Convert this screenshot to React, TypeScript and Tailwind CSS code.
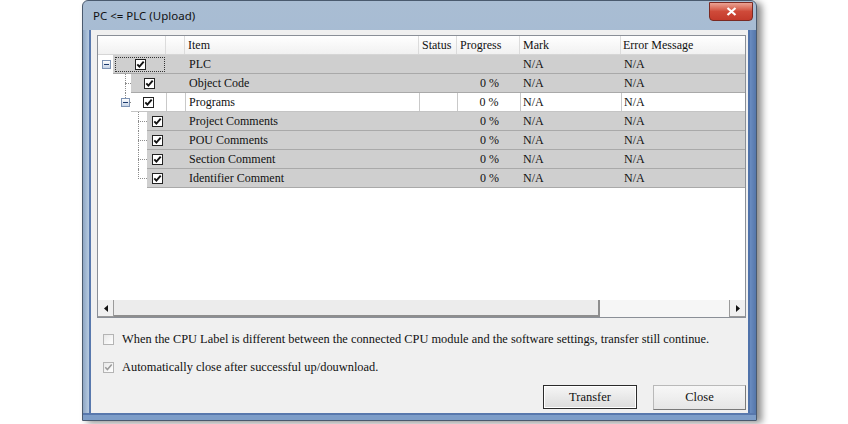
import type { ReactNode } from 'react'

type Row = {
  label: string
  level: 0 | 1 | 2
  progress: string
  white?: boolean
  focus?: boolean
}

const ROWS: Row[] = [
  { label: 'PLC', level: 0, progress: '', focus: true },
  { label: 'Object Code', level: 1, progress: '0 %' },
  { label: 'Programs', level: 1, progress: '0 %', white: true },
  { label: 'Project Comments', level: 2, progress: '0 %' },
  { label: 'POU Comments', level: 2, progress: '0 %' },
  { label: 'Section Comment', level: 2, progress: '0 %' },
  { label: 'Identifier Comment', level: 2, progress: '0 %' },
]

function Check({ size = 11 }: { size?: number }) {
  return (
    <div
      className="flex items-center justify-center border border-[#222] bg-white"
      style={{ width: size, height: size }}
    >
      <svg width="9" height="9" viewBox="0 0 9 9">
        <path d="M1.3 4.3 L3.4 6.6 L7.7 1.6" fill="none" stroke="#111" strokeWidth="1.9" />
      </svg>
    </div>
  )
}

function Minus() {
  return (
    <div className="flex h-[9px] w-[9px] items-center justify-center border border-[#7d93b4] bg-gradient-to-b from-white to-[#c5d3e6]">
      <div className="h-[1px] w-[5px] bg-[#1c3a6e]" />
    </div>
  )
}

function TreeCell({ row, index }: { row: Row; index: number }) {
  // tree guides, drawn per row
  if (row.level === 0) {
    return (
      <div className="relative flex w-[15px] shrink-0 items-center bg-white pl-[4px]">
        <Minus />
      </div>
    )
  }
  if (row.level === 1) {
    const isPrograms = row.white
    return (
      <div className="relative w-[33px] shrink-0 bg-white">
        <div
          className={`absolute left-[27px] top-0 w-0 border-l border-dotted border-[#8c8c8c] ${
            isPrograms ? 'h-[5px]' : 'h-full'
          }`}
        />
        <div className="absolute left-[27px] top-[9px] h-0 w-[6px] border-t border-dotted border-[#8c8c8c]" />
        {isPrograms && (
          <div className="absolute left-[23px] top-[5px]">
            <Minus />
          </div>
        )}
      </div>
    )
  }
  const last = index === ROWS.length - 1
  return (
    <div className="relative w-[49px] shrink-0 bg-white">
      <div
        className={`absolute left-[40px] top-0 w-0 border-l border-dotted border-[#8c8c8c] ${
          last ? 'h-[10px]' : 'h-full'
        }`}
      />
      <div className="absolute left-[40px] top-[9px] h-0 w-[9px] border-t border-dotted border-[#8c8c8c]" />
    </div>
  )
}

function Cell({
  w,
  children,
  className = '',
}: {
  w: string
  children?: ReactNode
  className?: string
}) {
  return <div className={`flex h-full shrink-0 items-center ${w} ${className}`}>{children}</div>
}

function GridRow({ row, index }: { row: Row; index: number }) {
  const sep = row.white ? 'border-r border-[#c9c9c9]' : ''
  return (
    <div className="flex h-[19px] shrink-0">
      <TreeCell row={row} index={index} />
      <div
        className={`flex flex-1 border-b ${
          row.white ? 'border-[#c4c4c4] bg-white' : 'border-[#a9a9a9] bg-[#cfcfcf]'
        }`}
      >
        <Cell w="flex-1" className={`justify-center ${sep}`}>
          {row.focus ? (
            <div className="mx-[2px] flex h-[15px] w-full items-center justify-center border border-dotted border-[#333]">
              <Check />
            </div>
          ) : (
            <Check />
          )}
        </Cell>
        <Cell w="w-[19px]" className={sep} />
        <Cell w="w-[234px]" className={`pl-[3px] ${sep}`}>
          {row.label}
        </Cell>
        <Cell w="w-[38px]" className={sep} />
        <Cell w="w-[63px]" className={`justify-center ${sep}`}>
          {row.progress}
        </Cell>
        <Cell w="w-[101px]" className={`pl-[2px] ${sep}`}>
          N/A
        </Cell>
        <Cell w="w-[123px]" className="pl-[2px]">
          N/A
        </Cell>
      </div>
    </div>
  )
}

function Header() {
  const cls = 'flex h-full shrink-0 items-center border-r border-[#dcdcdc] pl-[3px]'
  return (
    <div className="flex h-[19px] shrink-0 border-b border-[#d6d6d6] bg-gradient-to-b from-white to-[#f1f1f1]">
      <div className={`${cls} w-[68px]`} />
      <div className={`${cls} w-[19px]`} />
      <div className={`${cls} w-[234px]`}>Item</div>
      <div className={`${cls} w-[38px]`}>Status</div>
      <div className={`${cls} w-[63px]`}>Progress</div>
      <div className={`${cls} w-[101px]`}>Mark</div>
      <div className="flex h-full flex-1 items-center pl-[2px]">Error Message</div>
    </div>
  )
}

function ScrollBar() {
  return (
    <div className="flex h-[17px] shrink-0 bg-[#f6f6f6]">
      <div className="flex w-[16px] items-center justify-center border-r border-b border-[#9a9a9a] bg-[#f0f0f0]">
        <svg width="4" height="7" viewBox="0 0 4 7">
          <path d="M4 0 L0 3.5 L4 7 Z" fill="#111" />
        </svg>
      </div>
      <div className="w-[486px] border-r-2 border-b-2 border-[#8e8e8e] bg-[#ececec]" />
      <div className="flex-1" />
      <div className="flex w-[16px] items-center justify-center border-l border-b border-[#9a9a9a] bg-[#f0f0f0]">
        <svg width="4" height="7" viewBox="0 0 4 7">
          <path d="M0 0 L4 3.5 L0 7 Z" fill="#111" />
        </svg>
      </div>
    </div>
  )
}

function OptionBox({ checked }: { checked?: boolean }) {
  return (
    <div className="flex h-[11px] w-[11px] items-center justify-center border border-[#b4b4b4] bg-gradient-to-br from-[#e8e8e8] to-white">
      {checked && (
        <svg width="9" height="9" viewBox="0 0 9 9">
          <path d="M1.3 4.3 L3.4 6.6 L7.7 1.6" fill="none" stroke="#9a9a9a" strokeWidth="1.5" />
        </svg>
      )}
    </div>
  )
}

export default function App() {
  return (
    <div className="h-[424px] w-[848px] overflow-hidden bg-white pl-[82px] font-['Liberation_Serif','Times_New_Roman',serif]">
      <div className="flex h-[421px] w-[675px] flex-col rounded-t-[6px] border border-[#4a5a6e] bg-gradient-to-b from-[#a9bdd3] to-[#8fadd2] shadow-[5px_2px_7px_rgba(0,0,0,0.45)]">
        {/* title bar */}
        <div className="flex h-[29px] shrink-0 items-start justify-between">
          <div className="pl-[10px] pt-[9px] font-['Noto_Sans','Open_Sans',sans-serif] text-[11.5px] leading-none text-[#111]">
            PC &lt;= PLC (Upload)
          </div>
          <div className="mr-[3px] mt-[1px] flex h-[19px] w-[44px] items-center justify-center rounded-b-[4px] border border-[#7a2a22] bg-gradient-to-b from-[#e9a293] via-[#cf4a39] to-[#c33a2b]">
            <svg width="11" height="9" viewBox="0 0 11 9">
              <path d="M1.5 1 L9.5 8 M9.5 1 L1.5 8" stroke="white" strokeWidth="2.2" />
            </svg>
          </div>
        </div>

        <div className="flex min-h-0 flex-1">
          <div className="w-[8px] shrink-0 border-r-2 border-[#5878ad] bg-gradient-to-r from-[#8ea6c4] to-[#b7cbe1]" />
          {/* client area */}
          <div className="flex w-[657px] shrink-0 flex-col bg-[#f0f0f0] pl-[6px] pr-[2px] pt-[5px] text-[12px] text-[#111]">
            <div className="flex h-[283px] w-[649px] shrink-0 flex-col border border-[#8a8f97] bg-white leading-none">
              <Header />
              {ROWS.map((r, i) => (
                <GridRow key={r.label} row={r} index={i} />
              ))}
              <div className="flex-1" />
              <ScrollBar />
            </div>

            <div className="mt-[12px] flex h-[18px] items-center gap-[8px] pl-[6px] text-[12.4px]">
              <OptionBox />
              <span>
                When the CPU Label is different between the connected CPU module and the software
                settings, transfer still continue.
              </span>
            </div>
            <div className="mt-[10px] flex h-[18px] items-center gap-[8px] pl-[6px] text-[12.4px]">
              <OptionBox checked />
              <span>Automatically close after successful up/douwnload.</span>
            </div>

            <div className="mt-[9px] flex justify-end gap-[16px] text-[12.5px]">
              <button className="flex h-[24px] w-[94px] items-center justify-center border border-[#2b2b2b] bg-gradient-to-b from-[#f6f6f6] to-[#dcdcdc] font-['Liberation_Serif',serif] shadow-[inset_0_0_0_1px_#ffffff]">
                Transfer
              </button>
              <button className="flex h-[25px] w-[93px] items-center justify-center border border-[#b9b9b9] border-r-[#7a7a7a] border-b-[#7a7a7a] bg-gradient-to-b from-[#f7f7f7] to-[#e6e6e6] font-['Liberation_Serif',serif]">
                Close
              </button>
            </div>
          </div>
          <div className="w-[8px] shrink-0 border-l-2 border-[#4f72aa] bg-gradient-to-r from-[#6a8cc0] to-[#5577ab]" />
        </div>
        <div className="h-[7px] shrink-0 border-t-2 border-[#5878ad] bg-[#7d9dc8]" />
      </div>
    </div>
  )
}
